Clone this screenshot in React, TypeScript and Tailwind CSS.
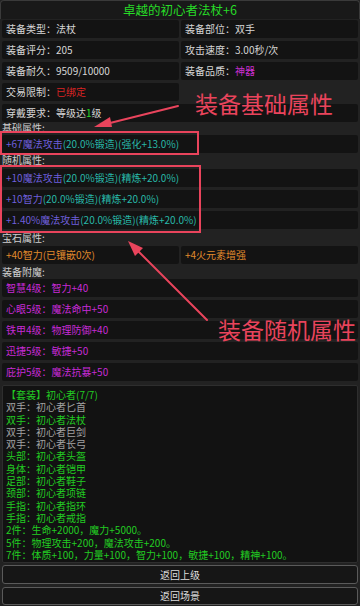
import type { ReactNode } from "react";

const font = "font-['Microsoft_YaHei','Noto_Sans_CJK_SC',sans-serif]";

type Line = { text: ReactNode; tone?: "on" | "off" };

const baseRows = [
  { left: "装备类型：", value: "法杖", right: "装备部位：", rvalue: "双手" },
  { left: "装备评分：", value: "205", right: "攻击速度：", rvalue: "3.00秒/次" },
  {
    left: "装备耐久：",
    value: "9509/10000",
    right: "装备品质：",
    rvalue: <span className="text-[#cc2fd0]">神器</span>,
  },
];

const randomAttrs = [
  { main: "+10魔法攻击", rest: "(20.0%锻造)(精炼+20.0%)" },
  { main: "+10智力", rest: "(20.0%锻造)(精炼+20.0%)" },
  { main: "+1.40%魔法攻击", rest: "(20.0%锻造)(精炼+20.0%)" },
];

const enchants = [
  "智慧4级：智力+40",
  "心眼5级：魔法命中+50",
  "铁甲4级：物理防御+40",
  "迅捷5级：敏捷+50",
  "庇护5级：魔法抗暴+50",
];

const setLines: Line[] = [
  { text: "【套装】初心者(7/7)", tone: "on" },
  { text: "双手：初心者匕首", tone: "off" },
  { text: "双手：初心者法杖", tone: "on" },
  { text: "双手：初心者巨剑", tone: "off" },
  { text: "双手：初心者长弓", tone: "off" },
  { text: "头部：初心者头盔", tone: "on" },
  { text: "身体：初心者铠甲", tone: "on" },
  { text: "足部：初心者鞋子", tone: "on" },
  { text: "颈部：初心者项链", tone: "on" },
  { text: "手指：初心者指环", tone: "on" },
  { text: "手指：初心者戒指", tone: "on" },
  { text: "2件：生命+2000，魔力+5000。", tone: "on" },
  { text: "5件：物理攻击+200，魔法攻击+200。", tone: "on" },
  { text: "7件：体质+100，力量+100，智力+100，敏捷+100，精神+100。", tone: "on" },
];

function Cell({ children, className = "" }: { children?: ReactNode; className?: string }) {
  return (
    <div
      className={`flex h-[18px] items-center rounded-[2px] bg-[#131313] px-[4px] leading-none whitespace-nowrap ${className}`}
    >
      {children}
    </div>
  );
}

function Label({ children, className = "" }: { children: ReactNode; className?: string }) {
  return (
    <div className={`flex h-[12px] items-center leading-none text-[#cfcfcf] ${className}`}>{children}</div>
  );
}

function Attr({ main, rest }: { main: string; rest: string }) {
  return (
    <Cell>
      <span className="text-[#6e5fdc]">{main}</span>
      <span className="text-[#28b8a8]">{rest}</span>
    </Cell>
  );
}

export default function App() {
  return (
    <div className={`relative h-[606px] w-[360px] overflow-hidden bg-[#222222] text-[10px] text-[#d6d6d6] ${font}`}>
      <div className="flex h-[19px] items-center justify-center rounded-t-[4px] border border-b-0 border-[#3a3a3a] bg-[#191919] text-[12.5px] leading-none text-[#27dc27]">
        卓越的初心者法杖+6
      </div>

      <div className="flex flex-col px-[2px]">
        <div className="mt-[1px] grid grid-cols-2 gap-x-[2px] gap-y-[3px]">
          {baseRows.map((r) => (
            <>
              <Cell key={r.left}>
                {r.left}
                {r.value}
              </Cell>
              <Cell key={r.right}>
                {r.right}
                {r.rvalue}
              </Cell>
            </>
          ))}
          <Cell>
            交易限制：<span className="text-[#d82323]">已绑定</span>
          </Cell>
          <div />
          <Cell className="col-span-2">
            穿戴要求：等级达<span className="text-[#27dc27]">1</span>级
          </Cell>
        </div>

        <Label>基础属性:</Label>
        <Cell className="mt-[1px]">
          <span className="text-[#6e5fdc]">+67魔法攻击</span>
          <span className="text-[#28b8a8]">(20.0%锻造)(强化+13.0%)</span>
        </Cell>

        <Label className="mt-[1px]">随机属性:</Label>
        <div className="mt-[3px] flex flex-col gap-[3px]">
          {randomAttrs.map((a) => (
            <Attr key={a.main} main={a.main} rest={a.rest} />
          ))}
        </div>

        <Label className="mt-[3px]">宝石属性:</Label>
        <div className="mt-[2px] grid grid-cols-2 gap-x-[2px]">
          <Cell className="text-[#e08a2c]">+40智力(已镶嵌0次)</Cell>
          <Cell className="text-[#e08a2c]">+4火元素增强</Cell>
        </div>

        <Label className="mt-[2px]">装备附魔:</Label>
        <div className="mt-[1px] flex flex-col gap-[3px]">
          {enchants.map((e) => (
            <Cell key={e} className="text-[#c72ad6]">
              {e}
            </Cell>
          ))}
        </div>

        <div className="mt-[4px] flex h-[178px] flex-col rounded-[2px] border border-[#2e2e2e] bg-[#121212] px-[3px] pt-[3px]">
          {setLines.map((l, i) => (
            <div
              key={i}
              className={`h-[12.3px] whitespace-nowrap leading-[12.3px] ${l.tone === "on" ? "text-[#22cc22]" : "text-[#a2a2a2]"}`}
            >
              {l.text}
            </div>
          ))}
        </div>

        <div className="mt-[2px] flex flex-col gap-[3px]">
          <button className="flex h-[19px] items-center justify-center rounded-[3px] border border-[#5a5a5a] bg-[#161616] leading-none text-[#dedede]">
            返回上级
          </button>
          <button className="flex h-[18px] items-center justify-center rounded-[3px] border border-[#5a5a5a] bg-[#161616] leading-none text-[#dedede]">
            返回场景
          </button>
        </div>
      </div>

      {/* annotation overlays */}
      <div className="pointer-events-none absolute left-[0px] top-[131px] h-[24px] w-[199px] border-2 border-[#e9445c]" />
      <div className="pointer-events-none absolute left-[0px] top-[165px] h-[68px] w-[201px] border-2 border-[#e9445c]" />
      <div className="pointer-events-none absolute left-[195px] top-[92px] text-[23px] leading-none text-[#e9445c]">
        装备基础属性
      </div>
      <div className="pointer-events-none absolute left-[218px] top-[318px] text-[23px] leading-none text-[#e9445c]">
        装备随机属性
      </div>
      <svg className="pointer-events-none absolute left-0 top-0" width="360" height="606" viewBox="0 0 360 606">
        <line x1="178" y1="106" x2="106" y2="124" stroke="#e9445c" strokeWidth="2" strokeLinecap="round" />
        <polygon points="94,127 110,117 112,127" fill="#e9445c" />
        <line x1="207" y1="320" x2="137" y2="250" stroke="#e9445c" strokeWidth="2" strokeLinecap="round" />
        <polygon points="128,241 143,248 135,256" fill="#e9445c" />
      </svg>
    </div>
  );
}
